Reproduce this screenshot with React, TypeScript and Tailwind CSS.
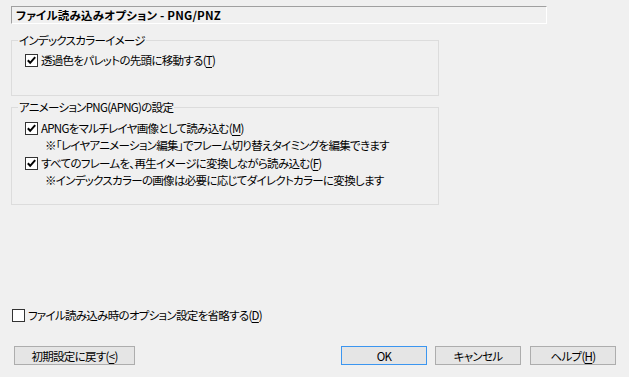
import type { ReactNode } from "react";

const font =
  "font-['Noto_Sans_CJK_JP','Noto_Sans',sans-serif] [font-feature-settings:'palt']";

function CheckBox({ checked }: { checked: boolean }) {
  return (
    <span className="flex h-[13px] w-[13px] shrink-0 items-center justify-center border border-[#333333] bg-white">
      {checked && (
        <svg width="11" height="11" viewBox="0 0 11 11">
          <polyline
            points="1.8,5.2 4.2,7.8 9.2,2.2"
            fill="none"
            stroke="#000"
            strokeWidth="2"
          />
        </svg>
      )}
    </span>
  );
}

function CheckRow({
  checked,
  children,
  className = "",
}: {
  checked: boolean;
  children: ReactNode;
  className?: string;
}) {
  return (
    <div className={`flex h-[16px] items-center gap-[3px] ${className}`}>
      <CheckBox checked={checked} />
      <span className="leading-[16px]">{children}</span>
    </div>
  );
}

function Group({
  title,
  className = "",
  children,
}: {
  title: string;
  className?: string;
  children: ReactNode;
}) {
  return (
    <fieldset
      className={`w-[428px] border border-[#dcdcdc] p-0 ${className}`}
    >
      <legend className="ml-[6px] px-[1px] leading-[16px]">{title}</legend>
      {children}
    </fieldset>
  );
}

function Button({
  children,
  primary = false,
  className = "",
}: {
  children: ReactNode;
  primary?: boolean;
  className?: string;
}) {
  return (
    <button
      className={`flex h-[19px] items-center justify-center border bg-[#e5e5e5] leading-[16px] text-black ${
        primary ? "border-[#3c96f0]" : "border-[#adadad]"
      } ${className}`}
    >
      {children}
    </button>
  );
}

const U = ({ children }: { children: ReactNode }) => (
  <span className="underline underline-offset-[2px]">{children}</span>
);

export default function App() {
  return (
    <div
      className={`flex h-[377px] w-[629px] flex-col bg-[#f0f0f0] pl-[11px] pt-[6px] text-[11.5px] tracking-[-0.7px] text-black ${font}`}
    >
      <div className="flex h-[18px] w-[536px] items-center border-t border-l border-r border-b border-t-[#a0a0a0] border-l-[#a0a0a0] border-r-white border-b-white pl-[4px] font-bold leading-[16px] tracking-[0.2px] whitespace-pre">
        ファイル読み込みオプション - PNG/PNZ
      </div>

      <Group title="インデックスカラーイメージ" className="mt-[8px] h-[64px]">
        <CheckRow checked className="mt-[4px] pl-[13px]">
          透過色をパレットの先頭に移動する(<U>T</U>)
        </CheckRow>
      </Group>

      <Group title="アニメーションPNG(APNG)の設定" className="mt-[3px] h-[106px]">
        <CheckRow checked className="mt-[5px] pl-[13px]">
          APNGをマルチレイヤ画像として読み込む(<U>M</U>)
        </CheckRow>
        <div className="mt-[1px] pl-[33px] leading-[16px]">
          ※「レイヤアニメーション編集」でフレーム切り替えタイミングを編集できます
        </div>
        <CheckRow checked className="mt-[2px] pl-[13px]">
          すべてのフレームを、再生イメージに変換しながら読み込む(<U>F</U>)
        </CheckRow>
        <div className="mt-[1px] pl-[33px] leading-[16px]">
          ※インデックスカラーの画像は必要に応じてダイレクトカラーに変換します
        </div>
      </Group>

      <CheckRow checked={false} className="ml-[1px] mt-[102px]">
        ファイル読み込み時のオプション設定を省略する(<U>D</U>)
      </CheckRow>

      <div className="mt-[23px] flex pr-[13px]">
        <Button className="ml-[3px] w-[121px]">
          初期設定に戻す(<U>&lt;</U>)
        </Button>
        <Button primary className="ml-auto w-[86px]">
          OK
        </Button>
        <Button className="ml-[8px] w-[86px]">キャンセル</Button>
        <Button className="ml-[9px] w-[86px]">
          ヘルプ(<U>H</U>)
        </Button>
      </div>
    </div>
  );
}
